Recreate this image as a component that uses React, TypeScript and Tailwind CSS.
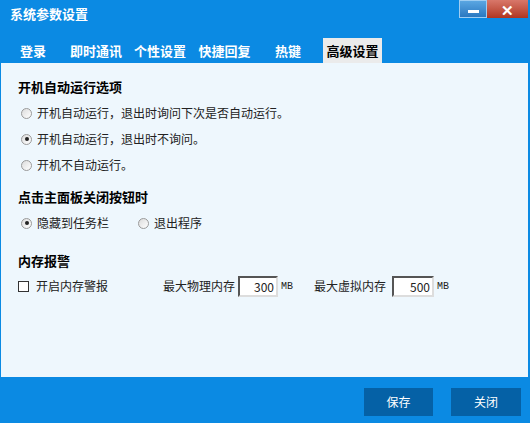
import React from 'react';

const font = { fontFamily: '"Noto Sans CJK SC", "Liberation Sans", sans-serif' };

const Radio = ({ checked = false }: { checked?: boolean }) => (
  <span className="w-[11px] h-[11px] rounded-full border border-[#9a9a9a] bg-gradient-to-br from-[#dcdcdc] to-white flex items-center justify-center shrink-0">
    {checked && <span className="w-[4px] h-[4px] rounded-full bg-[#222]"></span>}
  </span>
);

const tabs = [
  { label: '登录', w: 'w-[50px]' },
  { label: '即时通讯', w: 'w-[76px]' },
  { label: '个性设置', w: 'w-[52px]' },
  { label: '快捷回复', w: 'w-[77px]' },
  { label: '热键', w: 'w-[50px]' },
];

const App: React.FC = () => {
  return (
    <div className="w-[530px] h-[423px] bg-[#0b8ae3] flex flex-col text-[12px] overflow-hidden" style={font}>
      {/* title bar */}
      <div className="h-[30px] flex items-start justify-between">
        <span className="text-white font-bold text-[13px] pl-[10px] pt-[6px] leading-[16px]">系统参数设置</span>
        <div className="flex mr-[2px]">
          <div className="w-[28px] h-[18px] bg-gradient-to-b from-[#5aa6e2] to-[#2a78c0] border border-[#9fcdf2] flex items-center justify-center">
            <span className="w-[11px] h-[3px] bg-white mt-[4px]"></span>
          </div>
          <div className="w-[41px] h-[18px] bg-gradient-to-b from-[#d8776a] to-[#b03520] flex items-center justify-center text-white font-bold text-[15px] leading-none">
            ✕
          </div>
        </div>
      </div>

      {/* tabs */}
      <div className="h-[33px] flex items-end pl-[8px]">
        {tabs.map((t) => (
          <div key={t.label} className={`${t.w} h-[25px] flex items-center justify-center text-white font-bold text-[13px]`}>
            {t.label}
          </div>
        ))}
        <div className="ml-[10px] w-[59px] h-[25px] bg-[#ebebeb] flex items-center justify-center text-black font-bold text-[13px]">
          高级设置
        </div>
      </div>

      {/* panel */}
      <div className="ml-[1px] w-[527px] h-[314px] bg-[#eef7fd] text-[#222] pl-[17px] pt-[16px]">
        <div className="font-bold text-black text-[13px] leading-[16px]">开机自动运行选项</div>
        <div className="flex flex-col gap-[10px] mt-[10px] pl-[3px]">
          <div className="flex items-center gap-[5px] h-[16px]"><Radio />开机自动运行，退出时询问下次是否自动运行。</div>
          <div className="flex items-center gap-[5px] h-[16px]"><Radio checked />开机自动运行，退出时不询问。</div>
          <div className="flex items-center gap-[5px] h-[16px]"><Radio />开机不自动运行。</div>
        </div>

        <div className="font-bold text-black text-[13px] leading-[16px] mt-[16px]">点击主面板关闭按钮时</div>
        <div className="flex items-center h-[16px] mt-[10px] pl-[3px]">
          <div className="flex items-center gap-[5px] w-[117px]"><Radio checked />隐藏到任务栏</div>
          <div className="flex items-center gap-[5px]"><Radio />退出程序</div>
        </div>

        <div className="font-bold text-black text-[13px] leading-[16px] mt-[22px]">内存报警</div>
        <div className="flex items-center h-[22px] mt-[6px]">
          <div className="flex items-center gap-[7px] w-[145px]">
            <span className="w-[11px] h-[11px] border border-[#333] bg-white shrink-0"></span>
            开启内存警报
          </div>
          <span>最大物理内存</span>
          <div className="ml-[3px] w-[40px] h-[21px] bg-white border-2 border-t-[#555] border-l-[#555] border-r-[#ddd] border-b-[#ddd] text-right pr-[2px] leading-[17px]">300</div>
          <span className="ml-[3px] text-[10px] w-[33px]" style={{ fontFamily: '"Liberation Mono", monospace' }}>MB</span>
          <span>最大虚拟内存</span>
          <div className="ml-[6px] w-[42px] h-[21px] bg-white border-2 border-t-[#555] border-l-[#555] border-r-[#ddd] border-b-[#ddd] text-right pr-[2px] leading-[17px]">500</div>
          <span className="ml-[3px] text-[10px]" style={{ fontFamily: '"Liberation Mono", monospace' }}>MB</span>
        </div>
      </div>

      {/* footer */}
      <div className="flex justify-end gap-[18px] pr-[9px] pt-[11px]">
        <button className="w-[69px] h-[28px] bg-[#0561a6] text-white">保存</button>
        <button className="w-[70px] h-[28px] bg-[#0561a6] text-white">关闭</button>
      </div>
    </div>
  );
};

export default App;
